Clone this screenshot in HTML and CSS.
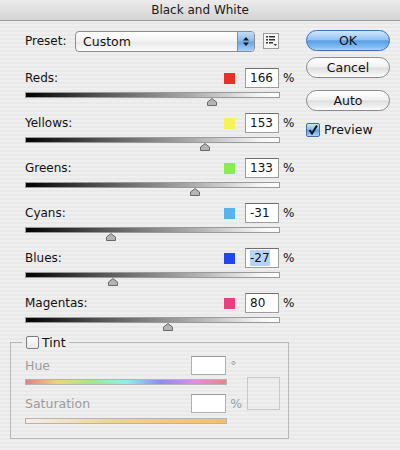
FILE: index.html
```
<!DOCTYPE html>
<html>
<head>
<meta charset="utf-8">
<link rel="stylesheet" href="styles.css">
</head>
<body>
<div class="window">
  <div class="titlebar">Black and White</div>
  <div class="dialog">
    <div class="left">
      <div class="preset">
        <span class="preset-label">Preset:</span>
        <div class="select">
          <span class="select-text">Custom</span>
          <span class="stepper">
            <svg width="8" height="11" viewBox="0 0 8 11"><path d="M4 1 L7 4.5 H1 Z M4 10 L7 6.5 H1 Z" fill="#1a1a1a"/></svg>
          </span>
        </div>
        <span class="menu-btn">
          <svg width="14" height="14" viewBox="0 0 14 14">
            <g fill="#333">
              <rect x="2" y="2" width="2" height="1.5"/><rect x="5" y="2" width="6" height="1.5"/>
              <rect x="2" y="5" width="2" height="1.5"/><rect x="5" y="5" width="6" height="1.5"/>
              <rect x="2" y="8" width="2" height="1.5"/><rect x="5" y="8" width="4" height="1.5"/>
              <path d="M9.5 10 H13 L11.25 12 Z"/>
            </g>
          </svg>
        </span>
      </div>

      <div class="channels">
        <div class="channel">
          <div class="channel-head"><span class="label">Reds:</span><span class="swatch sw-red"></span><span class="field">166</span><span class="unit">%</span></div>
          <div class="slider"><div class="track"></div><svg class="thumb" style="left:73.2%" width="10" height="8" viewBox="0 0 10 8"><path d="M0.5 7.5 V4 L5 0.6 L9.5 4 V7.5 Z" fill="#b4b4b4" stroke="#6a6a6a"/></svg></div>
        </div>
        <div class="channel">
          <div class="channel-head"><span class="label">Yellows:</span><span class="swatch sw-yellow"></span><span class="field">153</span><span class="unit">%</span></div>
          <div class="slider"><div class="track"></div><svg class="thumb" style="left:70.6%" width="10" height="8" viewBox="0 0 10 8"><path d="M0.5 7.5 V4 L5 0.6 L9.5 4 V7.5 Z" fill="#b4b4b4" stroke="#6a6a6a"/></svg></div>
        </div>
        <div class="channel">
          <div class="channel-head"><span class="label">Greens:</span><span class="swatch sw-green"></span><span class="field">133</span><span class="unit">%</span></div>
          <div class="slider"><div class="track"></div><svg class="thumb" style="left:66.6%" width="10" height="8" viewBox="0 0 10 8"><path d="M0.5 7.5 V4 L5 0.6 L9.5 4 V7.5 Z" fill="#b4b4b4" stroke="#6a6a6a"/></svg></div>
        </div>
        <div class="channel">
          <div class="channel-head"><span class="label">Cyans:</span><span class="swatch sw-cyan"></span><span class="field">-31</span><span class="unit">%</span></div>
          <div class="slider"><div class="track"></div><svg class="thumb" style="left:33.8%" width="10" height="8" viewBox="0 0 10 8"><path d="M0.5 7.5 V4 L5 0.6 L9.5 4 V7.5 Z" fill="#b4b4b4" stroke="#6a6a6a"/></svg></div>
        </div>
        <div class="channel">
          <div class="channel-head"><span class="label">Blues:</span><span class="swatch sw-blue"></span><span class="field"><span class="selected">-27</span></span><span class="unit">%</span></div>
          <div class="slider"><div class="track"></div><svg class="thumb" style="left:34.6%" width="10" height="8" viewBox="0 0 10 8"><path d="M0.5 7.5 V4 L5 0.6 L9.5 4 V7.5 Z" fill="#b4b4b4" stroke="#6a6a6a"/></svg></div>
        </div>
        <div class="channel">
          <div class="channel-head"><span class="label">Magentas:</span><span class="swatch sw-magenta"></span><span class="field">80</span><span class="unit">%</span></div>
          <div class="slider"><div class="track"></div><svg class="thumb" style="left:56%" width="10" height="8" viewBox="0 0 10 8"><path d="M0.5 7.5 V4 L5 0.6 L9.5 4 V7.5 Z" fill="#b4b4b4" stroke="#6a6a6a"/></svg></div>
        </div>
      </div>

      <fieldset class="tint">
        <legend><span class="checkbox"></span><span class="legend-text">Tint</span></legend>
        <div class="tint-body">
          <div class="tint-controls">
            <div class="tint-row"><span class="dim-label">Hue</span><span class="tfield"></span><span class="tunit">°</span></div>
            <div class="bar bar-hue"></div>
            <div class="tint-row row-sat"><span class="dim-label">Saturation</span><span class="tfield"></span><span class="tunit">%</span></div>
            <div class="bar bar-sat"></div>
          </div>
          <div class="tint-preview"></div>
        </div>
      </fieldset>
    </div>

    <div class="right">
      <div class="btn btn-default">OK</div>
      <div class="btn btn-cancel">Cancel</div>
      <div class="btn btn-auto">Auto</div>
      <div class="preview-check">
        <span class="check-on">
          <svg width="12" height="12" viewBox="0 0 12 12"><path d="M2.5 6 L5 9.5 L10 1.5" fill="none" stroke="#111" stroke-width="2"/></svg>
        </span>
        <span>Preview</span>
      </div>
    </div>
  </div>
</div>
</body>
</html>
```

FILE: styles.css
```
* { box-sizing: border-box; }

html, body {
  margin: 0;
  padding: 0;
}

body {
  width: 400px;
  height: 450px;
  overflow: hidden;
  font-family: "DejaVu Sans", "Liberation Sans", sans-serif;
  font-size: 12px;
  color: #111;
}

.window {
  width: 400px;
  height: 450px;
  background: repeating-linear-gradient(to bottom, #efefef 0, #efefef 2px, #e9e9e9 2px, #e9e9e9 4px);
}

.titlebar {
  height: 21px;
  line-height: 20px;
  text-align: center;
  font-size: 12px;
  color: #1a1a1a;
  background: linear-gradient(to bottom, #ececec, #d4d4d4);
  border-bottom: 1px solid #9a9a9a;
}

.dialog {
  display: flex;
}

.left {
  margin-left: 10px;
  width: 282px;
  padding-top: 10px;
}

/* Preset row */
.preset {
  display: flex;
  align-items: center;
  height: 20px;
  padding-left: 15px;
  margin-bottom: 17px;
}

.preset-label {
  width: 50px;
}

.select {
  width: 180px;
  height: 21px;
  display: flex;
  border: 1px solid #8c8c8c;
  border-radius: 4px;
  background: linear-gradient(to bottom, #ffffff, #f2f2f2 50%, #e8e8e8 51%, #fbfbfb);
  overflow: hidden;
}

.select-text {
  flex: 1;
  line-height: 19px;
  padding-left: 7px;
  font-size: 12.5px;
}

.stepper {
  width: 17px;
  display: flex;
  align-items: center;
  justify-content: center;
  border-left: 1px solid #6d8fbf;
  background: linear-gradient(to bottom, #c5dcf6, #8bb8ea 48%, #6aa2e2 52%, #a8d2fa);
}

.menu-btn {
  margin-left: 8px;
  width: 16px;
  height: 16px;
  border: 1px solid #9a9a9a;
  background: #f6f6f6;
  display: flex;
  align-items: center;
  justify-content: center;
}

/* Channels */
.channels {
  padding-left: 15px;
}

.channel {
  margin-bottom: 8px;
}

.channel-head {
  display: flex;
  align-items: center;
  height: 20px;
}

.label {
  flex: 1;
}

.swatch {
  width: 11px;
  height: 11px;
  margin-right: 10px;
}

.sw-red { background: #e8302a; }
.sw-yellow { background: #f8f25a; }
.sw-green { background: #88ee4c; }
.sw-cyan { background: #58b2ee; }
.sw-blue { background: #2246ee; }
.sw-magenta { background: #e8407e; }

.field {
  width: 34px;
  height: 20px;
  line-height: 18px;
  padding-left: 4px;
  background: #fff;
  border: 1px solid #9c9c9c;
  border-top-color: #6e6e6e;
}

.selected {
  background: #b6d4fa;
  padding: 1px 0;
}

.unit {
  width: 9px;
  margin-left: 4px;
}

.slider {
  position: relative;
  width: 255px;
  height: 13px;
  margin-top: 4px;
}

.track {
  height: 6px;
  border: 1px solid #9a9a9a;
  background: linear-gradient(to right, #000 0%, #555 30%, #aaa 65%, #f4f4f4 92%, #fff 100%);
}

.thumb {
  position: absolute;
  top: 6px;
  margin-left: -5px;
  display: block;
}

/* Tint */
.tint {
  margin: -2px 0 0 0;
  width: 279px;
  border: 1px solid #b8b8b8;
  padding: 7px 8px 14px 11px;
  min-width: 0;
}

.tint legend {
  padding: 0 3px 0 4px;
  display: flex;
  align-items: center;
  height: 13px;
  font-size: 12.5px;
}

.checkbox {
  width: 13px;
  height: 13px;
  border: 1px solid #7c7c7c;
  border-radius: 2px;
  background: linear-gradient(to bottom, #fdfdfd, #e8e8e8);
  margin-right: 3px;
}

.tint-body {
  display: flex;
  margin-left: 3px;
}

.tint-controls {
  width: 215px;
}

.tint-row {
  display: flex;
  align-items: center;
  height: 19px;
}

.row-sat {
  margin-top: 9px;
}

.dim-label {
  flex: 1;
  color: #9c9c9c;
  font-size: 12.5px;
}

.tfield {
  width: 35px;
  height: 19px;
  background: #fff;
  border: 1px solid #b0b0b0;
  border-top-color: #999;
}

.tunit {
  width: 9px;
  margin-left: 4px;
  color: #9c9c9c;
  font-size: 12.5px;
}

.bar {
  width: 202px;
  height: 6px;
  border: 1px solid #b4b4b4;
}

.bar-hue {
  margin-top: 4px;
  background: linear-gradient(to right, #e08282, #ecd77e 16%, #9ee88e 33%, #94eef0 50%, #8e8ee6 67%, #e08ce6 84%, #e48888);
}

.bar-sat {
  margin-top: 5px;
  background: linear-gradient(to right, #f4f0e8, #f0d49c 40%, #eec070);
}

.tint-preview {
  margin-left: 8px;
  margin-top: 21px;
  width: 33px;
  height: 33px;
  border: 1px solid #c8c8c8;
}

/* Right column */
.right {
  margin-left: 14px;
  width: 84px;
  padding-top: 9px;
}

.btn {
  height: 21px;
  border-radius: 11px;
  text-align: center;
  line-height: 19px;
  font-size: 12.5px;
  color: #111;
}

.btn-default {
  border: 1px solid #3d6fae;
  background: linear-gradient(to bottom, #cfe6fc 0%, #94c4f2 45%, #5b9de4 52%, #7fbdf4 85%, #aedafc 100%);
}

.btn-cancel, .btn-auto {
  border: 1px solid #8a8a8a;
  background: linear-gradient(to bottom, #ffffff 0%, #f2f2f2 45%, #dedede 52%, #f2f2f2 85%, #ffffff 100%);
}

.btn-cancel {
  margin-top: 6px;
}

.btn-auto {
  margin-top: 12px;
}

.preview-check {
  margin-top: 11px;
  display: flex;
  align-items: center;
  height: 15px;
  font-size: 12.5px;
}

.check-on {
  width: 14px;
  height: 14px;
  border: 1px solid #3d6fae;
  border-radius: 2px;
  background: linear-gradient(to bottom, #cfe6fc, #7db6ee 50%, #5b9de4 52%, #a8d6fc);
  display: flex;
  align-items: center;
  justify-content: center;
  margin-right: 4px;
}
```
